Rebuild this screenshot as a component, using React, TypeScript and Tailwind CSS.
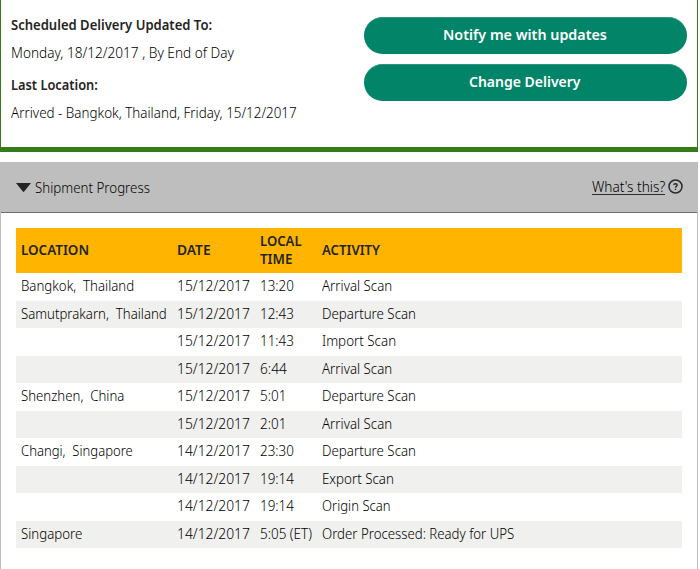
import { useLayoutEffect, useRef, useState } from "react";

/** A single line of text condensed horizontally to a given width. */
function Fit({ w, children, className = "" }: { w: number; children: string; className?: string }) {
  const ref = useRef<HTMLSpanElement>(null);
  const [scale, setScale] = useState(1);
  useLayoutEffect(() => {
    const measure = () => {
      if (ref.current) setScale(w / ref.current.offsetWidth);
    };
    measure();
    document.fonts.ready.then(measure);
  }, [w, children]);
  return (
    <span className={`block whitespace-pre ${className}`} style={{ width: w }}>
      <span ref={ref} className="inline-block origin-left" style={{ transform: `scaleX(${scale})` }}>
        {children}
      </span>
    </span>
  );
}

type Cell = [string, number];
type Row = { location?: Cell; date: string; time: Cell; activity: Cell };

const rows: Row[] = [
  { location: ["Bangkok,  Thailand", 113], date: "15/12/2017", time: ["13:20", 34], activity: ["Arrival Scan", 70] },
  { location: ["Samutprakarn,  Thailand", 146], date: "15/12/2017", time: ["12:43", 34], activity: ["Departure Scan", 94] },
  { date: "15/12/2017", time: ["11:43", 34], activity: ["Import Scan", 74] },
  { date: "15/12/2017", time: ["6:44", 26.5], activity: ["Arrival Scan", 70] },
  { location: ["Shenzhen,  China", 103], date: "15/12/2017", time: ["5:01", 26], activity: ["Departure Scan", 94] },
  { date: "15/12/2017", time: ["2:01", 26], activity: ["Arrival Scan", 70] },
  { location: ["Changi,  Singapore", 111.5], date: "14/12/2017", time: ["23:30", 34], activity: ["Departure Scan", 94] },
  { date: "14/12/2017", time: ["19:14", 34], activity: ["Export Scan", 72] },
  { date: "14/12/2017", time: ["19:14", 34], activity: ["Origin Scan", 69] },
  { location: ["Singapore", 61], date: "14/12/2017", time: ["5:05 (ET)", 52], activity: ["Order Processed: Ready for UPS", 192] },
];

const columns = "grid grid-cols-[156px_83px_62px_1fr] items-center pl-[5px]";

export default function App() {
  return (
    <div className="h-[569px] w-[698px] overflow-hidden bg-white font-['Noto_Sans',sans-serif] text-[15px] font-light text-black">
      <section className="flex h-[152px] justify-between border-x border-b-[5px] border-[#367c16] pr-[10px] pl-[10px]">
        <div className="pt-[10px] leading-7">
          <Fit w={201} className="font-semibold text-[#242424]">Scheduled Delivery Updated To:</Fit>
          <Fit w={222.5}>Monday, 18/12/2017 , By End of Day</Fit>
          <Fit w={86.5} className="mt-1 font-semibold text-[#242424]">Last Location:</Fit>
          <Fit w={286}>Arrived - Bangkok, Thailand, Friday, 15/12/2017</Fit>
        </div>
        <div className="flex w-[323px] flex-col gap-[10px] pt-[17px] font-semibold text-white">
          <button className="flex h-[37px] items-center justify-center rounded-full border-t border-[#2f957d] bg-[#028468] pr-px pb-[3px]">
            <Fit w={164}>Notify me with updates</Fit>
          </button>
          <button className="flex h-[37px] items-center justify-center rounded-full border-t border-[#2f957d] bg-[#028468] pr-px pb-[3px]">
            <Fit w={112}>Change Delivery</Fit>
          </button>
        </div>
      </section>

      <section className="mt-[10px] h-[420px] border-x border-[#bebebe]">
        <header className="flex h-[51px] items-center justify-between border-b border-[#6d6d6d] bg-[#bebebe] pr-[14px] pl-[15px]">
          <div className="flex items-center gap-[4px]">
            <svg className="h-[9px] w-[15px]" viewBox="0 0 15 9" fill="#242424">
              <path d="M0 0h15L8.2 8.5Q7.5 9.3 6.8 8.5Z" />
            </svg>
            <Fit w={114.5}>Shipment Progress</Fit>
          </div>
          <div className="flex items-center gap-[3px] pb-[2px]">
            <div className="h-[17px] border-b border-[#2b2b2b] leading-[17px]">
              <Fit w={73}>What's this?</Fit>
            </div>
            <svg className="h-[15px] w-[15px]" viewBox="0 0 15 15" fill="none" stroke="#2b2b2b">
              <circle cx="7.5" cy="7.5" r="6.5" strokeWidth="1.5" />
              <path d="M5.8 6.1C5.8 4.3 9.2 4.3 9.2 6.1C9.2 7.2 7.5 7.2 7.5 8.7M7.5 9.7v1.3" strokeWidth="1.4" />
            </svg>
          </div>
        </header>

        <div className="mx-[15px] mt-[15px] w-[666px]">
          <div className={`${columns} h-[45px] bg-[#ffb500] pb-[3px] leading-[18px] font-semibold text-[#242424]`}>
            <Fit w={68}>LOCATION</Fit>
            <Fit w={34}>DATE</Fit>
            <div>
              <Fit w={42}>LOCAL</Fit>
              <Fit w={32}>TIME</Fit>
            </div>
            <Fit w={58}>ACTIVITY</Fit>
          </div>
          {rows.map((r, i) => (
            <div
              key={i}
              className={`${columns} h-[27.5px] leading-5 ${i % 2 ? "bg-[#f0f0ee] pb-[2px]" : "bg-white pb-[3px]"}`}
            >
              {r.location ? <Fit w={r.location[1]}>{r.location[0]}</Fit> : <span />}
              <Fit w={73}>{r.date}</Fit>
              <Fit w={r.time[1]}>{r.time[0]}</Fit>
              <Fit w={r.activity[1]}>{r.activity[0]}</Fit>
            </div>
          ))}
        </div>
      </section>
    </div>
  );
}
